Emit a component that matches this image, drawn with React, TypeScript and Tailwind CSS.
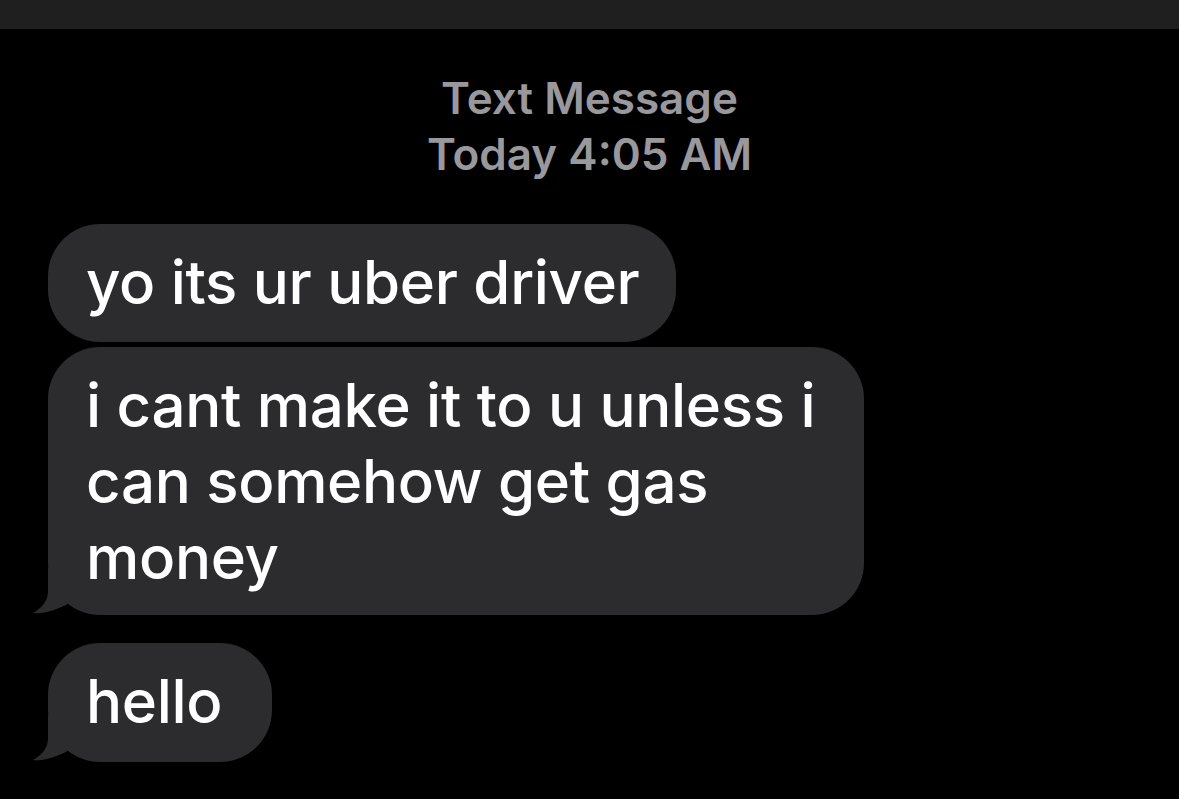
const bubbleFont = { fontFamily: '"Inter", "Liberation Sans", sans-serif' }

function Tail() {
  return (
    <svg
      className="absolute bottom-0 left-[-16px] h-[50px] w-[50px]"
      viewBox="0 0 50 50"
      fill="#2c2c2e"
    >
      <path d="M16 3 L16 26 C16 36 10 43 1 48 C9 49 19 47 34 40 L48 28 L28 3 Z" />
    </svg>
  )
}

function Bubble({ children, tail, className = '' }: { children: React.ReactNode; tail?: boolean; className?: string }) {
  return (
    <div className={`relative rounded-[52px] bg-[#2c2c2e] pl-[38px] pr-[36px] ${className}`}>
      {tail && <Tail />}
      <div
        className="relative text-[60px] font-medium leading-[76px] tracking-[-0.3px] text-white"
        style={bubbleFont}
      >
        {children}
      </div>
    </div>
  )
}

export default function App() {
  return (
    <div className="h-[799px] w-[1179px] overflow-hidden bg-black">
      <div className="h-[29px] bg-[#1f1f1f]" />
      <div
        className="mt-[41px] flex flex-col items-center text-[44px] font-semibold leading-[56px] text-[#98989d]"
        style={bubbleFont}
      >
        <span>Text Message</span>
        <span>Today 4:05 AM</span>
      </div>
      <div className="mt-[42px] flex flex-col items-start pl-[48px]">
        <Bubble className="h-[118px] py-[20px]">yo its ur uber driver</Bubble>
        <Bubble tail className="mt-[5px] w-[816px] pt-[20px] pb-[20px]">
          i cant make it to u unless i<br />
          can somehow get gas<br />
          money
        </Bubble>
        <Bubble tail className="mt-[28px] h-[119px] w-[224px] py-[20px]">hello</Bubble>
      </div>
    </div>
  )
}
